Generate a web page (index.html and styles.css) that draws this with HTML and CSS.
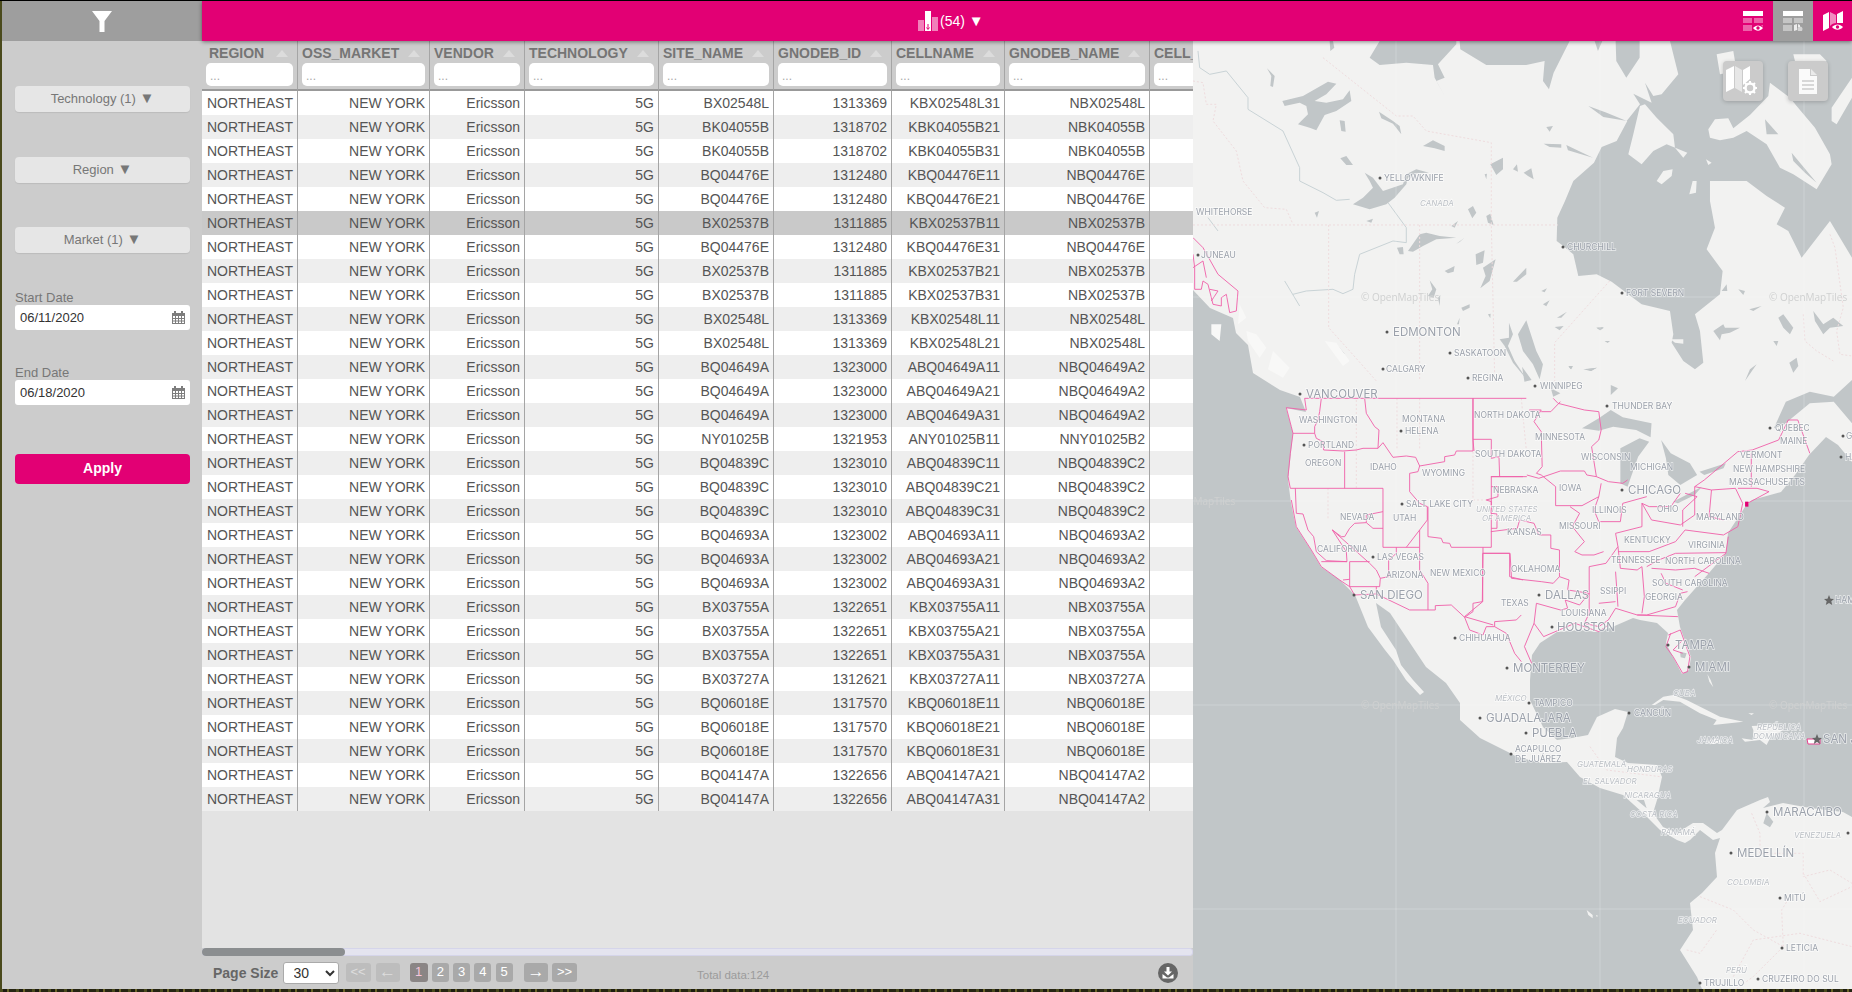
FILE: index.html
```html
<!DOCTYPE html>
<html lang="en">
<head>
    <meta charset="UTF-8">
    <title>Cell table and map</title>
    <link rel="stylesheet" href="styles.css">
</head>
<body>
<div class="app">
    <div class="side-head">
        <svg width="20" height="21" viewBox="0 0 20 21"><path fill="#fff" d="M0 0H20L12.5 10V21H7.5V10Z"/></svg>
    </div>
    <div class="top-bar">
        <div class="count">
            <svg width="20" height="20" viewBox="0 0 20 20">
                <rect x="0" y="9" width="6" height="11" fill="#fff" opacity=".5"/>
                <rect x="7" y="0" width="6" height="20" fill="#fff"/>
                <rect x="14" y="6" width="6" height="14" fill="#fff" opacity=".5"/>
                <path d="M10 13v5M8.500 16.500L10 18.500 11.500 16.500" stroke="#e20074" fill="none"/>
            </svg>
            <span>(54) <span class="tri">▼</span></span>
        </div>
        <div class="tabs">
            <div class="tab">
                <svg width="20" height="20" viewBox="0 0 20 20">
                    <rect width="20" height="5" fill="#fff"/>
                    <path fill="#fff" opacity=".38" d="M0 7H9V12H0ZM11 7H20V12H11ZM0 14H9V20H0ZM11 14H20V20H11Z"/>
                    <path fill="#e20074" d="M9 16c3-4 8-4 11 0v4H9Z"/>
                    <path fill="#fff" d="M10 17c3-3.500 7-3.500 10 0-3 3.500-7 3.500-10 0Z"/>
                    <circle cx="15" cy="17" r="1.700" fill="#e20074"/>
                </svg>
            </div>
            <div class="tab active">
                <svg width="20" height="20" viewBox="0 0 20 20">
                    <rect width="20" height="5" fill="#fff"/>
                    <path fill="#fff" opacity=".4" d="M0 7H9V12H0ZM11 7H20V12H11ZM0 14H9V20H0ZM11 14H20V20H11Z"/>
                    <path fill="#9e9e9e" d="M9 13H20V20H9Z"/>
                    <path fill="#fff" opacity=".8" d="M11 14l3-1v6l-3 1ZM15 13l2 1v2h-2Z"/>
                    <circle cx="17" cy="18" r="2.500" fill="#fff" opacity=".55"/>
                </svg>
            </div>
            <div class="tab last">
                <svg width="20" height="20" viewBox="0 0 20 20">
                    <path fill="#fff" d="M0 4L6 1V17L0 20ZM14 3L20 0V12H14Z"/>
                    <path fill="#fff" opacity=".55" d="M7 1L13 4V13L7 17Z"/>
                    <path fill="#e20074" d="M7 15c3-4 10-4 13 0v5H7Z"/>
                    <path fill="#fff" d="M9 16c3-3.500 8-3.500 11 0-3 3.500-8 3.500-11 0Z"/>
                    <circle cx="14.500" cy="16" r="1.700" fill="#e20074"/>
                </svg>
            </div>
        </div>
    </div>

    <aside class="sidebar">
        <div class="drop">Technology (1) <span class="tri">▼</span></div>
        <div class="drop">Region <span class="tri">▼</span></div>
        <div class="drop">Market (1) <span class="tri">▼</span></div>
        <div class="date-label">Start Date</div>
        <div class="date-box">
            <span>06/11/2020</span>
            <svg width="13" height="13" viewBox="0 0 13 13"><path fill="#7d7d7d" d="M0 2H2V0H4V2H9V0H11V2H13V13H0ZM1 5V7H3V5ZM4 5V7H6V5ZM7 5V7H9V5ZM10 5V7H12V5ZM1 8V9.500H3V8ZM4 8V9.500H6V8ZM7 8V9.500H9V8ZM10 8V9.500H12V8ZM1 10.500V12H3V10.500ZM4 10.500V12H6V10.500ZM7 10.500V12H9V10.500ZM10 10.500V12H12V10.500Z"/></svg>
        </div>
        <div class="date-label second">End Date</div>
        <div class="date-box">
            <span>06/18/2020</span>
            <svg width="13" height="13" viewBox="0 0 13 13"><path fill="#7d7d7d" d="M0 2H2V0H4V2H9V0H11V2H13V13H0ZM1 5V7H3V5ZM4 5V7H6V5ZM7 5V7H9V5ZM10 5V7H12V5ZM1 8V9.500H3V8ZM4 8V9.500H6V8ZM7 8V9.500H9V8ZM10 8V9.500H12V8ZM1 10.500V12H3V10.500ZM4 10.500V12H6V10.500ZM7 10.500V12H9V10.500ZM10 10.500V12H12V10.500Z"/></svg>
        </div>
        <div class="apply">Apply</div>
    </aside>

    <main class="content">
        <section class="table-pane">
            <div class="table-wrap">
                <table class="cells">
                    <colgroup>
                        <col class="c1"><col class="c2"><col class="c3"><col class="c4"><col class="c5"><col class="c6"><col class="c7"><col class="c8"><col class="c9">
                    </colgroup>
                    <thead>
                        <tr>
                            <th class="first"><div class="title">REGION<i></i></div><input placeholder="..."></th>
                            <th><div class="title">OSS_MARKET<i></i></div><input placeholder="..."></th>
                            <th><div class="title">VENDOR<i></i></div><input placeholder="..."></th>
                            <th><div class="title">TECHNOLOGY<i></i></div><input placeholder="..."></th>
                            <th><div class="title">SITE_NAME<i></i></div><input placeholder="..."></th>
                            <th><div class="title">GNODEB_ID<i></i></div><input placeholder="..."></th>
                            <th><div class="title">CELLNAME<i></i></div><input placeholder="..."></th>
                            <th><div class="title">GNODEB_NAME<i></i></div><input placeholder="..."></th>
                            <th><div class="title">CELL_ID<i></i></div><input placeholder="..."></th>
                        </tr>
                    </thead>
                    <tbody>
                        <tr><td>NORTHEAST</td><td>NEW YORK</td><td>Ericsson</td><td>5G</td><td>BX02548L</td><td>1313369</td><td>KBX02548L31</td><td>NBX02548L</td><td></td></tr>
                        <tr><td>NORTHEAST</td><td>NEW YORK</td><td>Ericsson</td><td>5G</td><td>BK04055B</td><td>1318702</td><td>KBK04055B21</td><td>NBK04055B</td><td></td></tr>
                        <tr><td>NORTHEAST</td><td>NEW YORK</td><td>Ericsson</td><td>5G</td><td>BK04055B</td><td>1318702</td><td>KBK04055B31</td><td>NBK04055B</td><td></td></tr>
                        <tr><td>NORTHEAST</td><td>NEW YORK</td><td>Ericsson</td><td>5G</td><td>BQ04476E</td><td>1312480</td><td>KBQ04476E11</td><td>NBQ04476E</td><td></td></tr>
                        <tr><td>NORTHEAST</td><td>NEW YORK</td><td>Ericsson</td><td>5G</td><td>BQ04476E</td><td>1312480</td><td>KBQ04476E21</td><td>NBQ04476E</td><td></td></tr>
                        <tr class="selected"><td>NORTHEAST</td><td>NEW YORK</td><td>Ericsson</td><td>5G</td><td>BX02537B</td><td>1311885</td><td>KBX02537B11</td><td>NBX02537B</td><td></td></tr>
                        <tr><td>NORTHEAST</td><td>NEW YORK</td><td>Ericsson</td><td>5G</td><td>BQ04476E</td><td>1312480</td><td>KBQ04476E31</td><td>NBQ04476E</td><td></td></tr>
                        <tr><td>NORTHEAST</td><td>NEW YORK</td><td>Ericsson</td><td>5G</td><td>BX02537B</td><td>1311885</td><td>KBX02537B21</td><td>NBX02537B</td><td></td></tr>
                        <tr><td>NORTHEAST</td><td>NEW YORK</td><td>Ericsson</td><td>5G</td><td>BX02537B</td><td>1311885</td><td>KBX02537B31</td><td>NBX02537B</td><td></td></tr>
                        <tr><td>NORTHEAST</td><td>NEW YORK</td><td>Ericsson</td><td>5G</td><td>BX02548L</td><td>1313369</td><td>KBX02548L11</td><td>NBX02548L</td><td></td></tr>
                        <tr><td>NORTHEAST</td><td>NEW YORK</td><td>Ericsson</td><td>5G</td><td>BX02548L</td><td>1313369</td><td>KBX02548L21</td><td>NBX02548L</td><td></td></tr>
                        <tr><td>NORTHEAST</td><td>NEW YORK</td><td>Ericsson</td><td>5G</td><td>BQ04649A</td><td>1323000</td><td>ABQ04649A11</td><td>NBQ04649A2</td><td></td></tr>
                        <tr><td>NORTHEAST</td><td>NEW YORK</td><td>Ericsson</td><td>5G</td><td>BQ04649A</td><td>1323000</td><td>ABQ04649A21</td><td>NBQ04649A2</td><td></td></tr>
                        <tr><td>NORTHEAST</td><td>NEW YORK</td><td>Ericsson</td><td>5G</td><td>BQ04649A</td><td>1323000</td><td>ABQ04649A31</td><td>NBQ04649A2</td><td></td></tr>
                        <tr><td>NORTHEAST</td><td>NEW YORK</td><td>Ericsson</td><td>5G</td><td>NY01025B</td><td>1321953</td><td>ANY01025B11</td><td>NNY01025B2</td><td></td></tr>
                        <tr><td>NORTHEAST</td><td>NEW YORK</td><td>Ericsson</td><td>5G</td><td>BQ04839C</td><td>1323010</td><td>ABQ04839C11</td><td>NBQ04839C2</td><td></td></tr>
                        <tr><td>NORTHEAST</td><td>NEW YORK</td><td>Ericsson</td><td>5G</td><td>BQ04839C</td><td>1323010</td><td>ABQ04839C21</td><td>NBQ04839C2</td><td></td></tr>
                        <tr><td>NORTHEAST</td><td>NEW YORK</td><td>Ericsson</td><td>5G</td><td>BQ04839C</td><td>1323010</td><td>ABQ04839C31</td><td>NBQ04839C2</td><td></td></tr>
                        <tr><td>NORTHEAST</td><td>NEW YORK</td><td>Ericsson</td><td>5G</td><td>BQ04693A</td><td>1323002</td><td>ABQ04693A11</td><td>NBQ04693A2</td><td></td></tr>
                        <tr><td>NORTHEAST</td><td>NEW YORK</td><td>Ericsson</td><td>5G</td><td>BQ04693A</td><td>1323002</td><td>ABQ04693A21</td><td>NBQ04693A2</td><td></td></tr>
                        <tr><td>NORTHEAST</td><td>NEW YORK</td><td>Ericsson</td><td>5G</td><td>BQ04693A</td><td>1323002</td><td>ABQ04693A31</td><td>NBQ04693A2</td><td></td></tr>
                        <tr><td>NORTHEAST</td><td>NEW YORK</td><td>Ericsson</td><td>5G</td><td>BX03755A</td><td>1322651</td><td>KBX03755A11</td><td>NBX03755A</td><td></td></tr>
                        <tr><td>NORTHEAST</td><td>NEW YORK</td><td>Ericsson</td><td>5G</td><td>BX03755A</td><td>1322651</td><td>KBX03755A21</td><td>NBX03755A</td><td></td></tr>
                        <tr><td>NORTHEAST</td><td>NEW YORK</td><td>Ericsson</td><td>5G</td><td>BX03755A</td><td>1322651</td><td>KBX03755A31</td><td>NBX03755A</td><td></td></tr>
                        <tr><td>NORTHEAST</td><td>NEW YORK</td><td>Ericsson</td><td>5G</td><td>BX03727A</td><td>1312621</td><td>KBX03727A11</td><td>NBX03727A</td><td></td></tr>
                        <tr><td>NORTHEAST</td><td>NEW YORK</td><td>Ericsson</td><td>5G</td><td>BQ06018E</td><td>1317570</td><td>KBQ06018E11</td><td>NBQ06018E</td><td></td></tr>
                        <tr><td>NORTHEAST</td><td>NEW YORK</td><td>Ericsson</td><td>5G</td><td>BQ06018E</td><td>1317570</td><td>KBQ06018E21</td><td>NBQ06018E</td><td></td></tr>
                        <tr><td>NORTHEAST</td><td>NEW YORK</td><td>Ericsson</td><td>5G</td><td>BQ06018E</td><td>1317570</td><td>KBQ06018E31</td><td>NBQ06018E</td><td></td></tr>
                        <tr><td>NORTHEAST</td><td>NEW YORK</td><td>Ericsson</td><td>5G</td><td>BQ04147A</td><td>1322656</td><td>ABQ04147A21</td><td>NBQ04147A2</td><td></td></tr>
                        <tr><td>NORTHEAST</td><td>NEW YORK</td><td>Ericsson</td><td>5G</td><td>BQ04147A</td><td>1322656</td><td>ABQ04147A31</td><td>NBQ04147A2</td><td></td></tr>
                    </tbody>
                </table>
            </div>
            <div class="h-scroll"><div class="thumb"></div></div>
            <div class="pager">
                <span class="size-label">Page Size</span>
                <select class="size"><option>30</option><option>50</option></select>
                <span class="pg off wide">&lt;&lt;</span>
                <span class="pg off arrow">←</span>
                <span class="pg num now">1</span>
                <span class="pg num">2</span>
                <span class="pg num">3</span>
                <span class="pg num">4</span>
                <span class="pg num">5</span>
                <span class="pg arrow next">→</span>
                <span class="pg wide">&gt;&gt;</span>
                <span class="total">Total data:124</span>
                <svg class="download" width="20" height="20" viewBox="0 0 20 20">
                    <circle cx="10" cy="10" r="10" fill="#666"/>
                    <path fill="#fff" d="M8.500 4H11.500V8.500H14L10 12.500 6 8.500H8.500ZM4.500 11L9 14.500H11L15.500 11V15.500H4.500Z"/>
                </svg>
            </div>
        </section>

        <section class="map">
            <svg class="map-svg" width="659" height="948" viewBox="1193 41 659 948">
                <rect class="water" x="1193" y="41" width="659" height="948"/>
                <path class="land" d="M1193 41H1852V462L1838 445 1826 437 1809 455 1795 475 1781 492 1752 500 1745 507 1728 533 1726 553 1709 573 1685 600 1677 610 1680 627 1691 657 1689 670 1682 674 1673 657 1666 643 1668 633 1657 623 1640 620 1633 618 1610 628 1597 632 1580 630 1557 632 1540 643 1532 655 1530 680 1530 700 1543 727 1557 740 1572 738 1588 735 1597 717 1615 709 1628 712 1623 728 1617 738 1615 757 1628 763 1657 765 1662 777 1657 800 1653 813 1663 827 1677 833 1693 823 1703 823 1717 833 1722 830 1737 810 1760 800 1768 797 1770 802 1763 808 1783 803 1810 808 1843 812 1852 817V989H1702L1697 977 1680 950 1693 930 1690 903 1702 893 1717 877 1715 853 1720 838 1713 840 1700 830 1690 840 1685 843 1677 840 1660 830 1643 813 1623 795 1600 788 1580 777 1567 762 1543 763 1517 757 1510 753 1480 738 1460 720 1460 703 1446 683 1426 667 1406 637 1390 613 1376 603 1381 627 1396 650 1401 665 1413 680 1424 692 1420 695 1406 680 1393 660 1385 650 1368 627 1355 595 1340 580 1321 567 1311 550 1296 527 1291 503 1288 480 1293 433 1286 408 1306 412 1300 397 1280 390 1253 373 1248 345 1236 333 1233 318 1210 308 1193 290Z"/>

                <g transform="translate(1400 41) scale(.3333)">
                    <path class="water" d="M810 0L835 100 785 160 760 165 735 125 755 185 700 158 720 190 680 240 620 215 565 195 610 228 682 240 650 300 605 318 582 365 520 420 495 480 472 530 470 600 490 615 520 640 535 705 590 700 635 722 725 790 810 810 820 880 815 905 850 960 885 985 910 965 900 870 885 820 960 760 968 690 920 625 945 560 930 480 930 420 1040 420 1100 465 1155 500 1130 550 1165 570 1205 650 1290 540 1356 650V0Z"/>
                    <path class="land" d="M720 195L700 280 685 340 725 370 760 330 800 310 862 335 850 350 825 320 820 280 770 230 735 190ZM925 265L945 235 985 232 1000 262 1050 222 1105 165 1110 125 1170 170 1190 195 1245 260 1290 340 1295 370 1250 445 1180 400 1140 380 1100 310 1040 270 1000 290 960 298 930 290ZM1295 200L1356 110V170L1310 250 1295 240ZM770 420L790 390 818 385 815 405 785 430ZM868 460L878 420 890 420 888 455ZM950 40L1000 30 1010 90 960 100ZM1180 40H1260L1280 60 1240 90 1190 80ZM918 355L935 365 925 372ZM812 895L850 895 850 908 825 905Z"/>
                    <path class="water" d="M1095 235L1135 280 1100 280ZM1175 335L1250 425 1215 395 1180 360Z"/>
                </g>

                <g transform="translate(1193 41) scale(.3333)">
                    <path class="river" d="M15 30L20 80 50 100 100 90 165 170 165 205 270 270 320 380 320 420 390 455 430 478 470 475M585 485L640 560 640 605 600 600 500 640 485 700 480 745 450 758 420 745 340 750 300 760M275 720L320 795M45 530L75 570"/>
                    <path class="water" d="M560 0L530 50 560 72 640 65 720 72 725 110 755 165 730 120 755 110 735 70 790 10V0ZM800 0L802 25 880 72 1000 72 1055 60 1050 120 1068 145 1082 95 1130 0ZM1205 0L1215 30 1228 0ZM1268 0L1270 60 1300 110 1340 50 1340 0ZM410 0L412 30 424 20 420 0Z"/>
                    <path class="lake" d="M268 180L330 165 405 122 430 128 400 160 365 180 400 185 450 175 470 148 475 180 430 210 395 222 370 268 350 260 315 250 345 220 340 195 320 185 275 195ZM515 395L540 410 570 450 630 430 640 400 670 385 708 395 670 397 645 410 640 430 605 470 580 490 530 505 480 490 510 470 540 440 530 420ZM645 630L680 580 700 575 740 585 790 590 730 595 690 615 660 632ZM222 82L245 105 240 138 232 135 235 105ZM442 352L460 345 480 372 460 372ZM558 212L600 240 620 255 625 280 600 248 565 232ZM440 238L455 240 458 272 445 270ZM690 315L720 298 755 315 755 330 725 322ZM892 370L930 350 930 385 910 402ZM960 385L972 370 975 392ZM992 395L1015 382 1022 415 1005 405ZM875 400L882 398 880 415ZM825 505L840 495 850 515 838 532ZM880 525L892 518 902 552 885 545ZM775 555L795 540 785 560ZM520 540L540 533 535 545ZM612 620L630 618 632 640 620 640ZM790 608L815 590 800 603ZM848 640L875 628 870 665 850 672ZM870 680L908 655 890 720 862 742 878 705ZM755 690L785 675 782 692 765 697ZM960 722L1000 680 1000 700 972 722ZM710 718L730 745 722 770 705 765 718 745ZM735 770L742 762 740 795ZM805 800L830 790 830 800 810 810ZM885 820L893 818 892 832ZM792 850L800 830 798 850ZM1045 750L1062 742 1055 754ZM1050 790L1070 778 1060 796ZM1092 830L1122 812 1105 830ZM1085 858L1112 855 1100 868ZM1210 860L1232 858 1222 868ZM1235 900H1250L1245 905ZM975 880L1000 838 1030 930 1050 970 1040 1015 1020 970 990 930ZM920 895L948 890 948 845 960 880 945 915 965 960 1005 1020 960 965 935 915ZM1052 308L1105 310 1105 320 1070 318ZM1120 312L1200 350 1165 340 1125 328ZM1060 258L1080 255 1070 272ZM365 515L378 510 372 530ZM1128 978L1140 975 1135 985ZM1180 985L1212 980 1195 990ZM430 908L455 938 445 940Z"/>
                    <path class="adm" d="M390 50L610 225 660 225 700 270 895 305 895 550 905 1000M0 120L30 125 40 190 70 190 60 240 130 330 150 420 215 500 280 505 300 550M0 552H1095M407 552V860L470 930 550 1020M680 552V1020M1250 720L1085 905V1020"/>
                    <path class="land-soft" d="M55 850L85 850 80 900 55 880ZM140 790L160 830 135 850ZM160 870L190 880 220 920 200 950 165 900ZM240 930L290 980 270 1010 225 985ZM395 900L430 905 470 960 450 975Z"/>
                    <path class="state" d="M0 590L30 620 75 700 135 750 130 810 110 815 100 760 85 770 85 795 60 790 45 730 30 720 25 745 5 745 5 680 0 640M0 680L30 660 40 710M50 745L75 750 55 780"/>
                </g>

                <g transform="translate(1400 41) scale(.3333)">
                    <path class="lake" d="M940 870L970 850 975 860 1020 860 990 875 965 880 960 898ZM1048 805L1085 795 1060 810ZM1015 745L1035 750 1030 762ZM965 750L980 730 982 750ZM1135 830L1150 820 1180 860 1170 880 1150 860ZM1120 900L1135 900 1130 915ZM1240 810L1270 850 1300 830 1330 855 1290 860 1270 880 1245 840ZM1168 965L1190 950 1195 975 1180 995ZM1035 1020L1070 970 1050 985ZM505 975L518 975 512 985ZM550 985L590 980 572 990ZM590 860L612 860 600 868ZM615 900H630L622 905Z"/>
                    <path class="adm" d="M1290 580L1305 620 1330 800 1310 870 1320 940 1356 945M1210 820L1215 900 1250 930 1300 960"/>
                </g>

                <g transform="translate(1100 360) scale(.4796 .3333)">
                    <path class="water" d="M1005 205L1040 175 1065 150 1090 172 1150 190 1148 232 1118 210 1070 200 1040 212ZM1085 265L1125 235 1145 245 1122 290 1100 380 1085 370 1085 320ZM1170 240L1190 280 1230 310 1245 345 1210 375 1185 345 1180 295ZM1195 425L1255 380 1240 405 1205 430ZM1250 335L1305 310 1300 325 1260 345ZM1430 125L1480 95 1530 110 1568 60V190L1530 125 1480 130 1425 195 1405 205Z"/>
                    <path class="lake" d="M940 85L960 100 945 110ZM1065 75L1080 85 1065 105ZM880 20L900 60 885 65Z"/>
                </g>

                <g transform="translate(1500 600) scale(.3333)">
                    <path class="land" d="M455 315L490 290 520 285 560 300 620 330 660 350 730 365 640 375 650 360 600 340 540 305 490 300 465 315ZM725 415L760 420 760 390 755 378 820 375 850 390 810 415 800 435 780 420 735 425ZM615 425L650 415 668 425 640 432ZM622 222L632 240 640 262 628 245ZM745 340H762L755 345ZM260 930L278 945 278 955 265 945ZM288 945L295 948 290 950Z"/>
                    <path class="water" d="M790 670L800 640 820 665 810 682ZM410 600L440 625 432 600ZM540 155L560 160 555 175 542 172Z"/>
                    <path class="adm" d="M755 640L780 700 780 760 910 760 910 830 990 810 1056 850M600 890L700 930 760 990 850 1040M850 1040L845 930 870 890M560 1050L600 1060 650 990M270 440L320 510 480 530M700 1130L760 1020 900 1000 1056 1040M710 1166L760 1130 850 1040M910 820L960 905 1056 860"/>
                </g>

                <path class="grat" d="M1396 41V989M1600 41V989M1804 41V989M1193 297H1852M1193 501H1852M1193 705H1852M1193 909H1852"/>

                <g transform="translate(1193 370) scale(.3333)">
                    <path class="adm" d="M490 240V355M405 355V450M612 85L612 240M680 85V240M840 390H895M490 90V240M840 245V390M985 85L1000 240"/>
                    <path class="state" d="M335 85H1000"/>
                    <path class="state" d="M335 85L340 120 280 113 295 170 300 190 292 250 285 320 292 355H570V532H680V480L703 450V410L680 400 650 365V310L675 305 680 288 755 275V260L785 255 790 243H840V85M385 85L380 125 375 150 365 170V190H300M365 190L370 205 390 215 392 240 450 243 490 240 510 235H555L558 180 545 170 520 130 515 85M555 235L570 218 585 240 600 262 640 258 668 262 680 288M455 245V355M307 355L310 430 330 432 345 480 362 500 370 545 400 572 462 575 460 545 418 480 445 500 455 500 470 475 485 460 520 458V435L570 425M520 458L540 475H570M418 480L530 580 550 600 562 625 587 620V570L610 550V532M385 575H462M470 575H530M470 575V650H560L562 625M450 630L470 628M470 650L485 675 550 672V650M550 672L650 720H705V640L680 600V532M640 532L680 480M705 410V500L745 505 750 518 770 520 775 532H895V320H990M840 208H895V265L918 260 920 320M840 85V208L843 243M870 532V550H950V620L990 630M870 550L868 695 840 700V725L815 742 775 705 727 707V720H705M815 742L830 780 870 795 880 770H905V755L970 750 985 735M905 770L940 790 965 850 985 875M895 350H915V380L880 390 895 395V430L912 432V475H895M295 390L310 470 355 540 385 590 440 630 470 650"/>
                </g>

                <g transform="translate(1100 360) scale(.4796 .3333)">
                    <path class="state" d="M895 150H920L905 185 920 215 922 320 910 340 920 345M945 115L955 130 1010 150 1040 155 1045 210 1040 240 1025 260 1035 350 1060 365 1090 370 1100 360M920 155H940L960 125M890 345L915 355 960 333H1010L1015 345 1035 350M815 350H890M920 345L950 380V437H1005L1040 410 1045 370M815 515L870 505 875 480 905 490 915 525H940V565L958 570V650L945 670 920 665 858 655 855 580H798M798 580V725L760 770 820 795M980 440L1000 460 985 500 1010 545 990 575 1005 585H1030L1050 575M1040 410L1030 450 1040 485H1085L1090 430 1140 410M958 650L978 660 975 690 1020 700V620L1055 610 1080 560 1075 520 1130 500V430L1145 440H1190L1210 400M1020 700L1000 735 970 720 975 745 960 750 910 730 905 790 925 830M1020 700V760L1010 790 1040 800 1060 780 1075 745 1120 765H1140L1200 740 1210 700 1225 695M1080 560L1085 625 1120 630 1130 620 1135 710 1130 760M1075 635L1080 740M1140 620L1165 600 1200 580 1305 578M1040 730L1075 725M1080 575H1145L1200 545 1220 510 1300 525M1150 625L1200 630 1240 625 1270 640M1170 640L1180 670 1215 690M1130 430L1150 480 1210 495 1240 465V380L1275 390 1325 385 1340 430 1330 500 1300 525M1275 390L1270 470 1300 480M1220 400L1245 410 1215 450V500M1330 385H1370L1395 395 1350 430M1358 280V380M1480 280L1455 180H1435L1415 240 1360 270 1330 275 1260 360 1240 380M1310 530L1305 580 1240 650M905 790L885 860 900 910M925 830L990 790 1040 815 1060 795M1120 765L1205 770M1190 820L1180 860 1195 890 1215 940 1225 935 1230 890 1210 810 1185 825M1215 880L1195 870 1215 840"/>
                    <path class="ny" d="M1345 425H1352V440H1345Z"/>
                </g>
                <path class="pr" d="M1807 739H1820V744H1808Z"/>

                <text class="wm" x="1361" y="301">© OpenMapTiles</text>
                <text class="wm" x="1769" y="301">© OpenMapTiles</text>
                <text class="wm" x="1361" y="709">© OpenMapTiles</text>
                <text class="wm" x="1769" y="709">© OpenMapTiles</text>
                <text class="wm" x="1157" y="505">© OpenMapTiles</text>

                <path class="dots" d="M1380 178h0M1198 255h0M1563 247h0M1622 293h0M1387 332h0M1450 353h0M1383 369h0M1468 378h0M1300 394h0M1401 431h0M1304 445h0M1402 504h0M1373 557h0M1354 595h0M1455 638h0M1539 595h0M1552 627h0M1622 490h0M1770 428h0M1607 406h0M1535 386h0M1507 668h0M1668 645h0M1689 667h0M1529 703h0M1480 718h0M1526 733h0M1629 713h0M1511 754h0M1767 812h0M1731 853h0M1780 898h0M1782 948h0M1700 983h0M1758 979h0M1848 833h0M1843 436h0M1841 457h0"/>

                <g class="lbl">
                    <text x="1384" y="181">YELLOWKNIFE</text>
                    <text x="1196" y="215">WHITEHORSE</text>
                    <text x="1201" y="258">JUNEAU</text>
                    <text x="1567" y="250">CHURCHILL</text>
                    <text x="1626" y="296">FORT SEVERN</text>
                    <text x="1454" y="356">SASKATOON</text>
                    <text x="1386" y="372">CALGARY</text>
                    <text x="1472" y="381">REGINA</text>
                    <text x="1299" y="423">WASHINGTON</text>
                    <text x="1402" y="422">MONTANA</text>
                    <text x="1405" y="434">HELENA</text>
                    <text x="1308" y="448">PORTLAND</text>
                    <text x="1305" y="466">OREGON</text>
                    <text x="1370" y="470">IDAHO</text>
                    <text x="1422" y="476">WYOMING</text>
                    <text x="1406" y="507">SALT LAKE CITY</text>
                    <text x="1393" y="521">UTAH</text>
                    <text x="1340" y="520">NEVADA</text>
                    <text x="1317" y="552">CALIFORNIA</text>
                    <text x="1377" y="560">LAS VEGAS</text>
                    <text x="1386" y="578">ARIZONA</text>
                    <text x="1430" y="576">NEW MEXICO</text>
                    <text x="1459" y="641">CHIHUAHUA</text>
                    <text x="1474" y="418">NORTH DAKOTA</text>
                    <text x="1475" y="457">SOUTH DAKOTA</text>
                    <text x="1493" y="493">NEBRASKA</text>
                    <text x="1507" y="535">KANSAS</text>
                    <text x="1511" y="572">OKLAHOMA</text>
                    <text x="1501" y="606">TEXAS</text>
                    <text x="1561" y="616">LOUISIANA</text>
                    <text x="1559" y="529">MISSOURI</text>
                    <text x="1559" y="491">IOWA</text>
                    <text x="1535" y="440">MINNESOTA</text>
                    <text x="1581" y="460">WISCONSIN</text>
                    <text x="1630" y="470">MICHIGAN</text>
                    <text x="1592" y="513">ILLINOIS</text>
                    <text x="1657" y="512">OHIO</text>
                    <text x="1624" y="543">KENTUCKY</text>
                    <text x="1611" y="563">TENNESSEE</text>
                    <text x="1600" y="594">SSIPPI</text>
                    <text x="1645" y="600">GEORGIA</text>
                    <text x="1652" y="586">SOUTH CAROLINA</text>
                    <text x="1665" y="564">NORTH CAROLINA</text>
                    <text x="1688" y="548">VIRGINIA</text>
                    <text x="1696" y="520">MARYLAND</text>
                    <text x="1740" y="458">VERMONT</text>
                    <text x="1733" y="472">NEW HAMPSHIRE</text>
                    <text x="1729" y="485">MASSACHUSETTS</text>
                    <text x="1780" y="444">MAINE</text>
                    <text x="1775" y="431">QUEBEC</text>
                    <text x="1612" y="409">THUNDER BAY</text>
                    <text x="1540" y="389">WINNIPEG</text>
                    <text x="1534" y="706">TAMPICO</text>
                    <text x="1634" y="716">CANCÚN</text>
                    <text x="1515" y="752">ACAPULCO</text>
                    <text x="1515" y="762">DE JUÁREZ</text>
                    <text x="1784" y="901">MITÚ</text>
                    <text x="1786" y="951">LETICIA</text>
                    <text x="1704" y="986">TRUJILLO</text>
                    <text x="1762" y="982">CRUZEIRO DO SUL</text>
                    <text x="1846" y="439">GASPÉ</text>
                    <text x="1845" y="460">HALIFAX</text>
                    <text x="1835" y="603">HAMILTON</text>
                </g>
                <g class="lbl big">
                    <text x="1393" y="336">EDMONTON</text>
                    <text x="1306" y="398">VANCOUVER</text>
                    <text x="1360" y="599">SAN DIEGO</text>
                    <text x="1545" y="599">DALLAS</text>
                    <text x="1557" y="631">HOUSTON</text>
                    <text x="1628" y="494">CHICAGO</text>
                    <text x="1513" y="672">MONTERREY</text>
                    <text x="1675" y="649">TAMPA</text>
                    <text x="1695" y="671">MIAMI</text>
                    <text x="1486" y="722">GUADALAJARA</text>
                    <text x="1532" y="737">PUEBLA</text>
                    <text x="1773" y="816">MARACAIBO</text>
                    <text x="1737" y="857">MEDELLÍN</text>
                    <text x="1823" y="743">SAN JUAN</text>
                </g>
                <g class="lbl country">
                    <text x="1420" y="206">CANADA</text>
                    <text x="1476" y="512">UNITED STATES</text>
                    <text x="1482" y="521">OF AMERICA</text>
                    <text x="1495" y="701">MÉXICO</text>
                    <text x="1673" y="696">CUBA</text>
                    <text x="1697" y="743">JAMAICA</text>
                    <text x="1757" y="730">REPÚBLICA</text>
                    <text x="1753" y="739">DOMINICANA</text>
                    <text x="1577" y="767">GUATEMALA</text>
                    <text x="1627" y="772">HONDURAS</text>
                    <text x="1583" y="784">EL SALVADOR</text>
                    <text x="1624" y="798">NICARAGUA</text>
                    <text x="1630" y="817">COSTA RICA</text>
                    <text x="1661" y="835">PANAMÁ</text>
                    <text x="1678" y="923">ECUADOR</text>
                    <text x="1727" y="885">COLOMBIA</text>
                    <text x="1794" y="838">VENEZUELA</text>
                    <text x="1726" y="973">PERÚ</text>
                </g>
                <path class="star" d="M1817 734L1818.500 737.700 1822 738 1819.300 740.300 1820.200 744 1817 742 1813.800 744 1814.700 740.300 1812 738 1815.500 737.700ZM1829 595L1830.500 598.700 1834 599 1831.300 601.300 1832.200 605 1829 603 1825.800 605 1826.700 601.300 1824 599 1827.500 598.700Z"/>
            </svg>
            <div class="map-btn first-btn">
                <svg width="34" height="30" viewBox="0 0 34 30">
                    <path fill="#fff" d="M0 4L8 0V22L0 26ZM17 4L24 0V13L17 19Z"/>
                    <path fill="#fff" opacity=".55" d="M9 0L16 4V26L9 22Z"/>
                    <circle cx="24" cy="22" r="4.500" fill="none" stroke="#fff" stroke-width="2.500"/>
                    <path stroke="#fff" stroke-width="2" d="M24 15V18M24 26V29M17 22H20M28 22H31M19 17L21 19M27 25L29 27M29 17L27 19M21 25L19 27"/>
                </svg>
            </div>
            <div class="map-btn">
                <svg width="18" height="25" viewBox="0 0 18 25">
                    <path fill="#fff" opacity=".9" d="M0 0H11V7H18V25H0Z"/>
                    <path fill="#fff" opacity=".6" d="M12 0L18 6H12Z"/>
                    <path stroke="#ccc" stroke-width="1.500" d="M3 12H15M3 16H15M3 20H15"/>
                </svg>
            </div>
        </section>
    </main>
</div>
</body>
</html>
```

FILE: styles.css
```css
* {
    margin: 0;
    padding: 0;
    box-sizing: border-box;
}
body {
    width: 1852px;
    height: 992px;
    overflow: hidden;
    border-top: 1px solid #000;
    background-color: #2c2a12;
    background-image: repeating-linear-gradient(90deg, #4a4a1c 0, #4a4a1c 3px, #1d1c10 3px, #1d1c10 7px, #6a6428 7px, #6a6428 9px, #262512 9px, #262512 16px);
    font-family: "Liberation Sans", Arial, sans-serif;
    color: #444;
}
.app {
    width: 1850px;
    height: 988px;
    margin-left: 2px;
    display: grid;
    grid-template-columns: 200px 1650px;
    grid-template-rows: 40px 948px;
}
.tri {
    font-size: 15px;
    line-height: 1;
}

/* top row */
.side-head {
    background-color: #9e9e9e;
    display: flex;
    align-items: center;
    justify-content: center;
}
.top-bar {
    background-color: #e20074;
    display: flex;
    align-items: center;
    padding-left: 716px;
    box-shadow: 0 1px 4px rgba(0, 0, 0, 0.45);
    position: relative;
    z-index: 2;
}
.count {
    display: flex;
    align-items: center;
    gap: 2px;
    color: #fff;
    font-size: 14px;
}
.tabs {
    display: flex;
    margin-left: auto;
    height: 40px;
}
.tab {
    width: 40px;
    height: 40px;
    display: flex;
    align-items: center;
    justify-content: center;
}
.tab.active {
    background-color: #9e9e9e;
}
.tab.last {
    width: 39px;
}

/* left filters */
.sidebar {
    background-color: #ccc;
    padding: 45px 12px 0 13px;
    display: flex;
    flex-direction: column;
}
.drop {
    height: 26px;
    line-height: 25px;
    margin-bottom: 45px;
    text-align: center;
    font-size: 13px;
    color: #777;
    background-color: #e6e6e6;
    border-radius: 4px;
    box-shadow: 0 1px 1px rgba(0, 0, 0, 0.08);
}
.drop:nth-child(2) {
    margin-bottom: 44px;
}
.drop:nth-child(3) {
    margin-bottom: 36px;
}
.date-label {
    height: 16px;
    line-height: 17px;
    font-size: 13px;
    color: #777;
}
.date-label.second {
    margin-top: 34px;
}
.date-box {
    height: 25px;
    background-color: #fff;
    border-radius: 3px;
    display: flex;
    align-items: center;
    justify-content: space-between;
    padding: 0 5px;
    font-size: 13px;
    color: #333;
}
.apply {
    height: 30px;
    line-height: 29px;
    margin-top: 49px;
    text-align: center;
    font-size: 14px;
    font-weight: bold;
    color: #fff;
    background-color: #e20074;
    border-radius: 4px;
}

/* table side */
.content {
    display: flex;
    height: 948px;
}
.table-pane {
    width: 991px;
    background-color: #ccc;
    display: flex;
    flex-direction: column;
}
.table-wrap {
    height: 907px;
    overflow: hidden;
    background-color: #e3e3e3;
}
.cells {
    border-collapse: separate;
    border-spacing: 0;
    table-layout: fixed;
    width: 1100px;
    font-size: 14px;
}
.c1 { width: 96px; }
.c2 { width: 132px; }
.c3 { width: 95px; }
.c4 { width: 134px; }
.c5 { width: 115px; }
.c6 { width: 118px; }
.c7 { width: 113px; }
.c8 { width: 145px; }
.c9 { width: 152px; }
.cells th {
    height: 50px;
    padding: 2px 4px 3px;
    vertical-align: top;
    background-color: #ccc;
    border-right: 1px solid #a5a5a5;
    border-bottom: 2px solid #999;
    text-align: left;
}
.title {
    display: flex;
    justify-content: space-between;
    align-items: center;
    height: 20px;
    white-space: nowrap;
    font-size: 14px;
    font-weight: bold;
    color: #757575;
}
.first .title {
    padding-left: 3px;
}
.title i {
    display: block;
    flex: none;
    width: 0;
    height: 0;
    margin-right: 5px;
    border-left: 6px solid transparent;
    border-right: 6px solid transparent;
    border-bottom: 7px solid #dcdcdc;
}
.cells th input {
    display: block;
    width: 100%;
    height: 23px;
    border: 0;
    border-radius: 5px;
    padding: 3px 4px 0;
    background-color: #fff;
    font-family: inherit;
    font-size: 12px;
}
.cells th input::placeholder {
    color: #aaa;
}
.cells td {
    height: 24px;
    padding: 0 4px 0 0;
    text-align: right;
    white-space: nowrap;
    color: #555;
    background-color: #fff;
    border-right: 1px solid #a5a5a5;
}
.cells tbody tr:nth-child(even) td {
    background-color: #eee;
}
.cells tbody tr.selected td {
    background-color: #c9c9c9;
}

/* scroll + pager */
.h-scroll {
    height: 8px;
    background-color: #e4e4ef;
    border: 1px solid #d5d5ea;
    border-radius: 3px;
}
.thumb {
    width: 143px;
    height: 8px;
    margin: -1px 0 0 -1px;
    background-color: #8b8e90;
    border-radius: 4px;
}
.pager {
    height: 33px;
    display: flex;
    align-items: center;
    padding-left: 11px;
    font-size: 14px;
    position: relative;
}
.size-label {
    width: 69.500px;
    font-weight: bold;
    color: #666;
}
.size {
    width: 56px;
    height: 22px;
    margin-right: 7px;
    font-size: 14px;
    font-family: inherit;
    color: #333;
    background-color: #fff;
    border: 1px solid #aaa;
    border-radius: 3px;
    padding-left: 6px;
}
.pg {
    height: 19px;
    line-height: 18px;
    text-align: center;
    color: #fff;
    background-color: #a9a9a9;
    border-radius: 3px;
    margin-right: 4px;
    font-size: 13px;
}
.pg.wide {
    width: 25px;
}
.pg.arrow {
    width: 24px;
    font-size: 17px;
}
.pg.off {
    background-color: #bdbdbd;
    color: #ddd;
}
.pg.off.wide {
    margin-right: 5px;
}
.pg.off.arrow {
    margin-right: 10px;
}
.pg.num {
    width: 17px;
    margin-right: 4.300px;
}
.pg.now {
    width: 18px;
    background-color: #8a8585;
    color: #f6c6dd;
}
.pg.next {
    margin-left: 7px;
}
.total {
    margin-left: 116px;
    padding-top: 4px;
    font-size: 11.500px;
    color: #9b9b9b;
}
.download {
    margin-left: auto;
    margin-right: 15px;
}

/* map */
.map {
    width: 659px;
    height: 948px;
    position: relative;
    overflow: hidden;
    background-color: #c1c6c8;
}
.map-svg {
    display: block;
    filter: blur(0.45px);
}
.map-svg path {
    vector-effect: non-scaling-stroke;
}
.map-svg .water, .map-svg .lake {
    fill: #c1c6c8;
}
.map-svg .land {
    fill: #f2f2f1;
}
.map-svg .land-soft {
    fill: #f8f8f7;
}
.map-svg .river {
    fill: none;
    stroke: #c9d3d6;
    stroke-width: 1;
}
.map-svg .adm {
    fill: none;
    stroke: #efdcde;
    stroke-width: 1;
    stroke-dasharray: 2 2;
}
.map-svg .grat {
    fill: none;
    stroke: #fff;
    stroke-opacity: 0.22;
    stroke-width: 1;
}
.map-svg .state {
    fill: none;
    stroke: #ef5fa8;
    stroke-opacity: 0.9;
    stroke-width: 1;
    stroke-linejoin: round;
}
.map-svg .ny {
    fill: #e20074;
}
.map-svg .pr {
    fill: #fff;
    stroke: #e8408f;
    stroke-width: 1;
}
.map-svg .dots {
    fill: none;
    stroke: #555;
    stroke-width: 3;
    stroke-linecap: round;
}
.map-svg .star {
    fill: #666;
}
.lbl text {
    font-family: Inter, "Noto Sans", sans-serif;
    font-size: 8.500px;
    fill: #9ba1ab;
    stroke: rgba(255, 255, 255, 0.65);
    stroke-width: 1.500px;
    paint-order: stroke;
}
.lbl.big text {
    font-size: 11.500px;
}
.lbl.country text {
    font-style: italic;
    font-size: 8px;
    fill: #bcc0c6;
}
.wm {
    font-family: "Open Sans", sans-serif;
    font-size: 10px;
    fill: #cfd0d0;
}
.map-btn {
    position: absolute;
    top: 20px;
    left: 595px;
    width: 40px;
    height: 40px;
    display: flex;
    align-items: center;
    justify-content: center;
    background-color: #cbcbcb;
    border-radius: 4px;
    box-shadow: 0 1px 4px rgba(0, 0, 0, 0.2);
}
.map-btn.first-btn {
    left: 530px;
}
```
